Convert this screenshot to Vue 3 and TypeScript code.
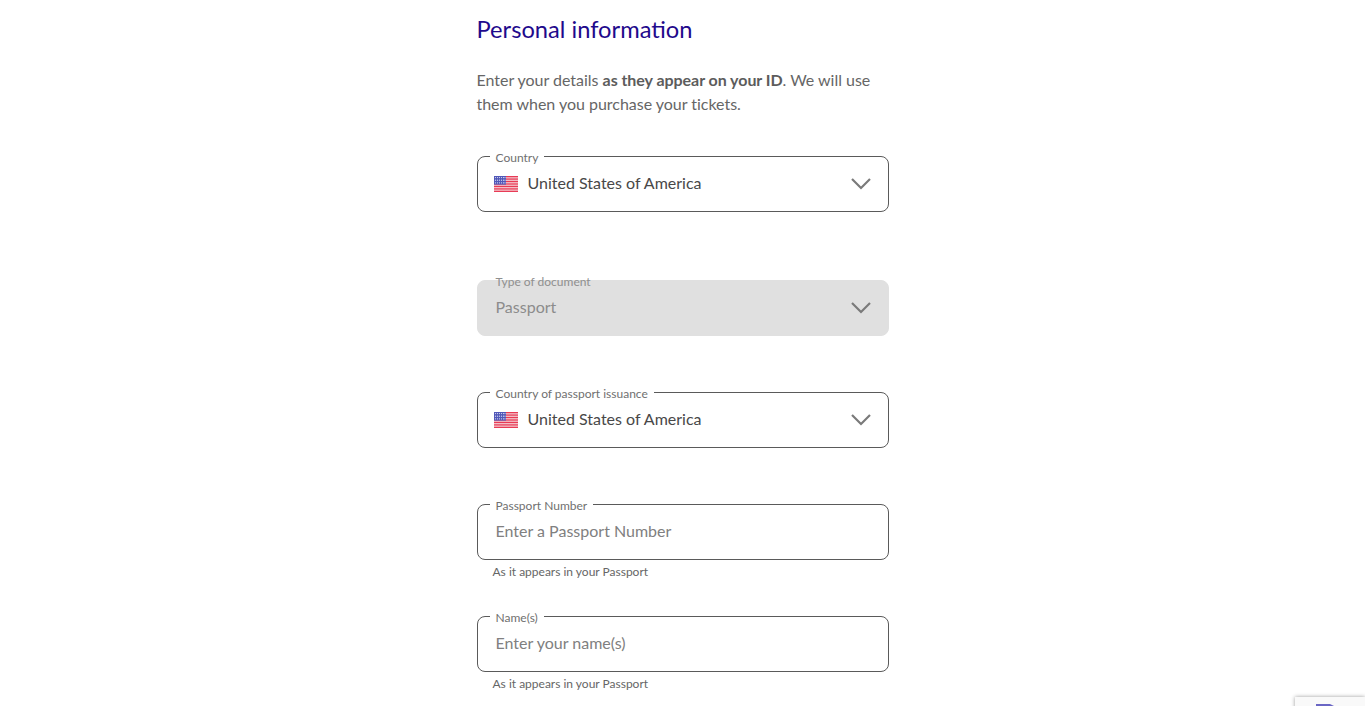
<script setup lang="ts">
interface Field {
  label: string;
  value?: string;
  placeholder?: string;
  flag?: boolean;
  select?: boolean;
  disabled?: boolean;
  helper?: string;
  gap: number;
}
const fields: Field[] = [
  { label: "Country", value: "United States of America", flag: true, select: true, gap: 68 },
  { label: "Type of document", value: "Passport", select: true, disabled: true, gap: 56 },
  { label: "Country of passport issuance", value: "United States of America", flag: true, select: true, gap: 56 },
  { label: "Passport Number", placeholder: "Enter a Passport Number", helper: "As it appears in your Passport", gap: 36 },
  { label: "Name(s)", placeholder: "Enter your name(s)", helper: "As it appears in your Passport", gap: 0 },
];
const stripes = [0, 2.46, 4.92, 7.38, 9.84, 12.3, 14.76];
const dotColumns = [1.5, 3.5, 5.5, 7.5, 9.5, 11];
const dotRows = [1.6, 4.2, 6.8];
</script>

<template>
  <main class="page">
    <section class="form">
      <h1 class="title">Personal information</h1>
      <p class="intro">Enter your details <strong>as they appear on your ID</strong>. We will use them when you purchase your tickets.</p>
      <div
        v-for="f in fields"
        :key="f.label"
        class="block"
        :style="{ marginBottom: f.gap + 'px' }"
      >
        <div class="field" :class="{ disabled: f.disabled }">
          <span class="label">{{ f.label }}</span>
          <svg v-if="f.flag" class="flag" viewBox="0 0 24 16" width="24" height="16" aria-hidden="true">
            <rect width="24" height="16" fill="#f3c9cf" />
            <rect v-for="y in stripes" :key="y" :y="y" width="24" height="1.23" fill="#e83a55" />
            <rect width="12" height="8.6" fill="#5057b8" />
            <g v-for="cy in dotRows" :key="cy" fill="#dde0f4">
              <circle v-for="x in dotColumns" :key="x" :cx="x" :cy="cy" r=".6" />
            </g>
          </svg>
          <span v-if="f.value" class="value">{{ f.value }}</span>
          <span v-else class="placeholder">{{ f.placeholder }}</span>
          <svg v-if="f.select" class="chevron" viewBox="0 0 20 12" width="20" height="12" aria-hidden="true">
            <path d="M1 1 L10 10 L19 1" fill="none" stroke="#7a7a7a" stroke-width="2.2" />
          </svg>
        </div>
        <div v-if="f.helper" class="helper">{{ f.helper }}</div>
      </div>
    </section>
    <aside class="captcha" aria-hidden="true">
      <svg class="captcha-icon" viewBox="0 0 32 10" width="32" height="10">
        <path d="M4 9 V0 H18 L26 4 L28 9 Z" fill="#6a66c4" />
      </svg>
    </aside>
  </main>
</template>

<style>
html, body { margin: 0; background: #fff; }
</style>

<style scoped>
.page {
  position: relative;
  height: 706px;
  overflow: hidden;
  background: #fff;
  font-family: Lato, "Noto Sans", sans-serif;
}
.form {
  width: 412px;
  margin: 0 auto;
}
.title {
  margin: 0;
  padding-top: 12px;
  font-size: 23.7px;
  line-height: 34px;
  font-weight: 400;
  color: #1f0a8c;
}
.intro {
  margin: 22px 0 40px;
  font-size: 16px;
  line-height: 24px;
  color: #666;
  letter-spacing: -0.02px;
}
.intro strong { font-weight: 700; letter-spacing: -0.05px; color: #5c5c5c; }
.block { position: relative; }
.field {
  position: relative;
  box-sizing: border-box;
  height: 56px;
  display: flex;
  align-items: center;
  padding: 0 16px;
  border: 1px solid #5a5a5a;
  border-radius: 8px;
  background: #fff;
  font-size: 16px;
  color: #484848;
}
.field.disabled {
  border-color: #e0e0e0;
  background: #e0e0e0;
  color: #8c8c8c;
  padding-left: 18px;
}
.label {
  position: absolute;
  left: 12px;
  top: -7px;
  padding: 0 6px;
  background: #fff;
  font-size: 12px;
  line-height: 16px;
  color: #707070;
  white-space: nowrap;
}
.disabled .label {
  background: transparent;
  color: #8f8f8f;
}
.flag { flex: none; margin-right: 10px; }
.value { flex: 1; padding-bottom: 3px; }
.placeholder {
  flex: 1;
  padding: 0 0 3px 2px;
  color: #808080;
}
.chevron { flex: none; margin-right: 1px; }
.helper {
  box-sizing: border-box;
  height: 20px;
  padding: 4px 0 0 16px;
  font-size: 12px;
  line-height: 16px;
  color: #666;
}
.captcha {
  position: absolute;
  left: 1295px;
  top: 697px;
  width: 70px;
  height: 60px;
  background: #f9f9f9;
  box-shadow: 0 0 4px rgba(0, 0, 0, 0.4);
}
.captcha-icon { position: absolute; left: 17px; top: 7px; }
</style>
